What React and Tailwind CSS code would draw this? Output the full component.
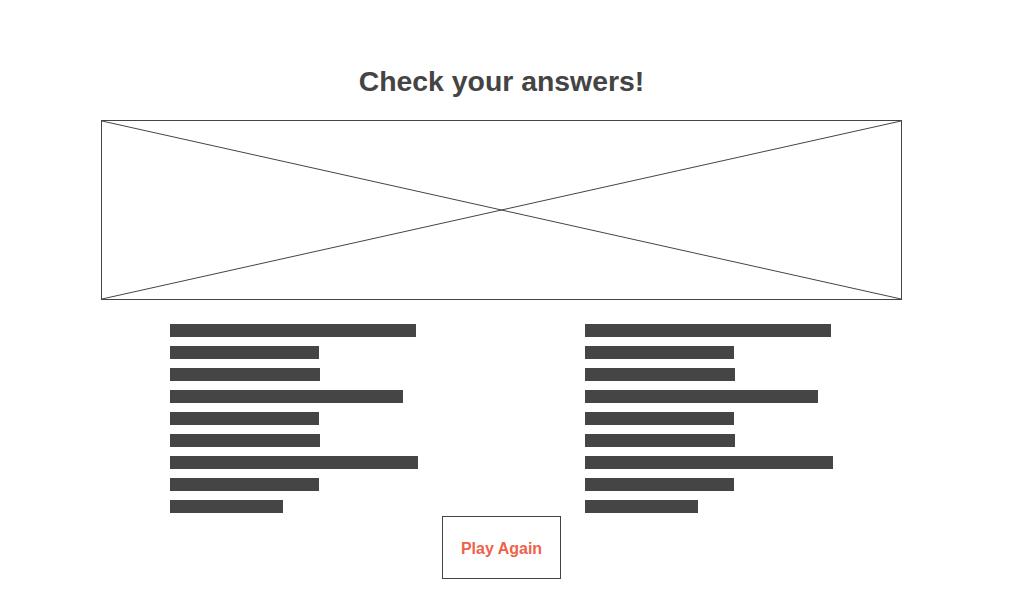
const LEFT = [246, 149, 150, 233, 149, 150, 248, 149, 113];
const RIGHT = [246, 149, 150, 233, 149, 150, 248, 149, 113];

function Bars({ widths, className }) {
  return (
    <div className={`flex flex-col gap-[9px] ${className}`}>
      {widths.map((w, i) => (
        <div key={i} className="h-[13px] bg-[#454545]" style={{ width: w }} />
      ))}
    </div>
  );
}

export default function App() {
  return (
    <div className="w-[1024px] h-[600px] bg-white font-['Liberation_Sans',Arial,sans-serif]">
      <div className="ml-[101px] w-[801px] pt-[63px]">
        <h1 className="text-center text-[28.4px] leading-[36px] font-bold text-[#444444]">
          Check your answers!
        </h1>

        {/* image placeholder */}
        <div className="mt-[21px] h-[180px] border border-[#444444] relative">
          <svg className="absolute inset-0 w-full h-full" viewBox="0 0 100 100" preserveAspectRatio="none">
            <line x1="0" y1="0" x2="100" y2="100" stroke="#444444" strokeWidth="1" vectorEffect="non-scaling-stroke" />
            <line x1="0" y1="100" x2="100" y2="0" stroke="#444444" strokeWidth="1" vectorEffect="non-scaling-stroke" />
          </svg>
        </div>

        <div className="flex pl-[69px] mt-[24px]">
          <Bars widths={LEFT} className="w-[415px] shrink-0" />
          <Bars widths={RIGHT} className="flex-1" />
        </div>

        <div className="flex justify-center mt-[3px]">
          <button className="w-[119px] h-[63px] border border-[#444444] bg-white text-[#f0614a] font-bold text-[16px] pt-[2px]">
            Play Again
          </button>
        </div>
      </div>
    </div>
  );
}
